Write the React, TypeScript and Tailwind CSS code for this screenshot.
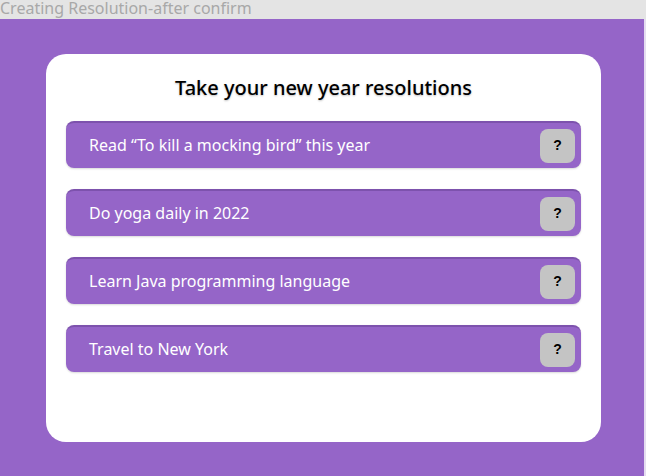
const resolutions = [
  "Read “To kill a mocking bird” this year",
  "Do yoga daily in 2022",
  "Learn Java programming language",
  "Travel to New York",
];

export default function App() {
  return (
    <div className="w-[646px] h-[476px] flex flex-col bg-[#e4e4e4] overflow-hidden font-['Noto_Sans',sans-serif]">
      <div className="h-[19px] flex items-center">
        <span className="text-[16px] leading-[19px] text-[#a8a8a8] -translate-y-[1px]">Creating Resolution-after confirm</span>
      </div>
      <div className="flex-1 flex pr-[2px] bg-[#e4dcf0]">
        <div className="flex-1 bg-[#9565c8] pt-[35px] pl-[46px] pr-[43px]">
          <div className="h-[388px] bg-white rounded-[20px] flex flex-col items-center pt-[20px] px-[20px]">
            <h1 className="text-[20px] font-medium text-black leading-[28px] [text-shadow:0_1px_2px_rgba(0,0,0,0.25)]">
              Take your new year resolutions
            </h1>
            <div className="w-full mt-[19px] flex flex-col gap-[21px]">
              {resolutions.map((r) => (
                <div
                  key={r}
                  className="h-[47px] w-full bg-[#9565c8] rounded-[8px] border-t-2 border-[#7d52ad] flex items-center justify-between pl-[23px] pr-[6px] shadow-[0_1px_2px_rgba(0,0,0,0.15)]"
                >
                  <span className="text-white text-[16px] -translate-y-[1px]">{r}</span>
                  <button className="w-[35px] h-[34px] bg-[#c4c4c4] rounded-[8px] text-[14px] font-bold text-black font-['Liberation_Sans',sans-serif]">
                    ?
                  </button>
                </div>
              ))}
            </div>
          </div>
        </div>
      </div>
    </div>
  );
}
